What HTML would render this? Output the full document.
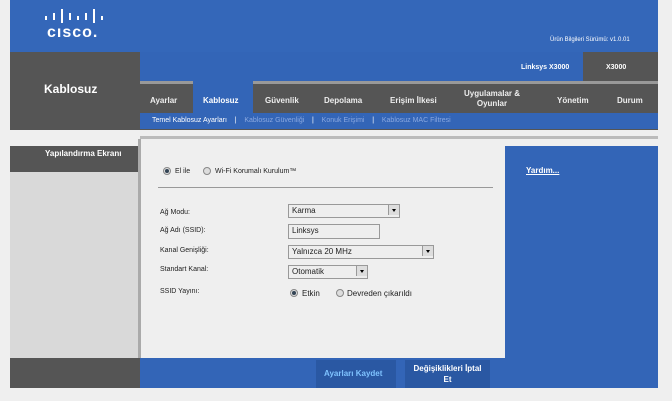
<!DOCTYPE html>
<html><head><meta charset="utf-8"><style>
*{margin:0;padding:0;box-sizing:border-box}
body{width:672px;height:401px;background:#efefef;position:relative;overflow:hidden;font-family:"Liberation Sans",sans-serif;font-size:8px;color:#222}
div,span{position:absolute}
.b{background:#3365b7}
.w{color:#fff;font-weight:bold}
.sel{background:#eee;border:1px solid #999;height:12px;font-size:8px;padding:1px 3px;color:#222}
.arr{right:0;top:0;width:11px;height:10px;background:#ddd;border-left:1px solid #999}
.arr:after{content:"";position:absolute;left:3px;top:4px;border:2px solid transparent;border-top:3px solid #000}
.rad{width:8px;height:8px;border-radius:50%;border:1px solid #888;background:#ddd}
.rad.on:after{content:"";position:absolute;left:1px;top:1px;width:4px;height:4px;border-radius:50%;background:#345}
.bar{background:#fff;width:2px}
</style></head><body>
<div class="b" style="left:10px;top:0;width:648px;height:52px;background:#3467b9"></div>
<div class="bar" style="left:45px;top:16px;height:4px"></div>
<div class="bar" style="left:53px;top:13px;height:7px"></div>
<div class="bar" style="left:61px;top:9px;height:14px"></div>
<div class="bar" style="left:69px;top:13px;height:7px"></div>
<div class="bar" style="left:77px;top:16px;height:4px"></div>
<div class="bar" style="left:85px;top:13px;height:7px"></div>
<div class="bar" style="left:93px;top:9px;height:14px"></div>
<div class="bar" style="left:101px;top:16px;height:4px"></div>
<div style="left:47px;top:24px;color:#fff;font-size:16px;font-weight:bold;letter-spacing:1px">cısco.</div>
<div style="left:550px;top:37px;color:#fff;font-size:6px">Ürün Bilgileri Sürümü: v1.0.01</div>
<div style="left:10px;top:52px;width:648px;height:78px;background:#555"></div>
<div style="left:44px;top:82px;color:#fff;font-size:12px;font-weight:bold">Kablosuz</div>
<div class="b" style="left:140px;top:52px;width:443px;height:29px"></div>
<div style="left:521px;top:64px;color:#fff;font-size:7px;font-weight:bold">Linksys X3000</div>
<div style="left:606px;top:64px;color:#fff;font-size:7px;font-weight:bold">X3000</div>
<div style="left:140px;top:81px;width:518px;height:3px;background:#999"></div>
<div class="b" style="left:193px;top:81px;width:60px;height:33px"></div>
<div class="w" style="left:150px;top:96px;color:#eee">Ayarlar</div>
<div class="w" style="left:203px;top:96px">Kablosuz</div>
<div class="w" style="left:265px;top:96px;color:#eee">Güvenlik</div>
<div class="w" style="left:324px;top:96px;color:#eee">Depolama</div>
<div class="w" style="left:390px;top:96px;color:#eee">Erişim İlkesi</div>
<div class="w" style="left:462px;top:89px;color:#eee;text-align:center;width:60px;line-height:10px">Uygulamalar &amp; Oyunlar</div>
<div class="w" style="left:557px;top:96px;color:#eee">Yönetim</div>
<div class="w" style="left:617px;top:96px;color:#eee">Durum</div>
<div class="b" style="left:140px;top:113px;width:518px;height:16px"></div>
<div style="left:152px;top:117px;color:#fff;font-size:7px">Temel Kablosuz Ayarları &nbsp;&nbsp;&nbsp;|&nbsp;&nbsp;&nbsp; <span style="position:static;color:#8aa8e0">Kablosuz Güvenliği</span> &nbsp;&nbsp;&nbsp;|&nbsp;&nbsp;&nbsp; <span style="position:static;color:#8aa8e0">Konuk Erişimi</span> &nbsp;&nbsp;&nbsp;|&nbsp;&nbsp;&nbsp; <span style="position:static;color:#8aa8e0">Kablosuz MAC Filtresi</span></div>
<div style="left:140px;top:136px;width:518px;height:3px;background:#bbb"></div>
<div style="left:10px;top:146px;width:130px;height:212px;background:#d9d9d9"></div>
<div style="left:10px;top:146px;width:130px;height:26px;background:#555"></div>
<div class="w" style="left:45px;top:149px">Yapılandırma Ekranı</div>
<div style="left:138px;top:139px;width:3px;height:220px;background:#aaa"></div>
<div class="b" style="left:505px;top:146px;width:153px;height:242px"></div>
<div style="left:526px;top:166px;color:#fff;font-weight:bold;text-decoration:underline">Yardım...</div>
<div class="rad on" style="left:163px;top:167px"></div><div style="left:175px;top:168px;font-size:7px">El ile</div>
<div class="rad" style="left:203px;top:167px"></div><div style="left:215px;top:168px;font-size:7px">Wi-Fi Korumalı Kurulum™</div>
<div style="left:158px;top:187px;width:335px;height:1px;background:#999"></div>
<div style="left:160px;top:209px;font-size:7px">Ağ Modu:</div>
<div style="left:160px;top:227px;font-size:7px">Ağ Adı (SSID):</div>
<div style="left:160px;top:247px;font-size:7px">Kanal Genişliği:</div>
<div style="left:160px;top:266px;font-size:7px">Standart Kanal:</div>
<div style="left:160px;top:288px;font-size:7px">SSID Yayını:</div>
<div class="sel" style="left:288px;top:204px;width:112px;height:14px">Karma<span class="arr"></span></div>
<div class="sel" style="left:288px;top:224px;width:92px;height:15px;background:#eee">Linksys</div>
<div class="sel" style="left:288px;top:245px;width:146px;height:14px">Yalnızca 20 MHz<span class="arr"></span></div>
<div class="sel" style="left:288px;top:265px;width:80px;height:14px">Otomatik<span class="arr"></span></div>
<div class="rad on" style="left:290px;top:289px"></div><div style="left:302px;top:289px;font-size:8px">Etkin</div>
<div class="rad" style="left:336px;top:289px"></div><div style="left:347px;top:289px;font-size:8px">Devreden çıkarıldı</div>
<div style="left:10px;top:358px;width:130px;height:30px;background:#555"></div>
<div class="b" style="left:140px;top:358px;width:365px;height:30px"></div>
<div style="left:316px;top:360px;width:80px;height:28px;background:#2a58a3"></div>
<div style="left:324px;top:369px;color:#7fc3ff;font-weight:bold;font-size:8px">Ayarları Kaydet</div>
<div style="left:405px;top:360px;width:85px;height:28px;background:#2a58a3"></div>
<div class="w" style="left:410px;top:363px;width:75px;text-align:center;line-height:11px;font-size:8px">Değişiklikleri İptal Et</div>
</body></html>
